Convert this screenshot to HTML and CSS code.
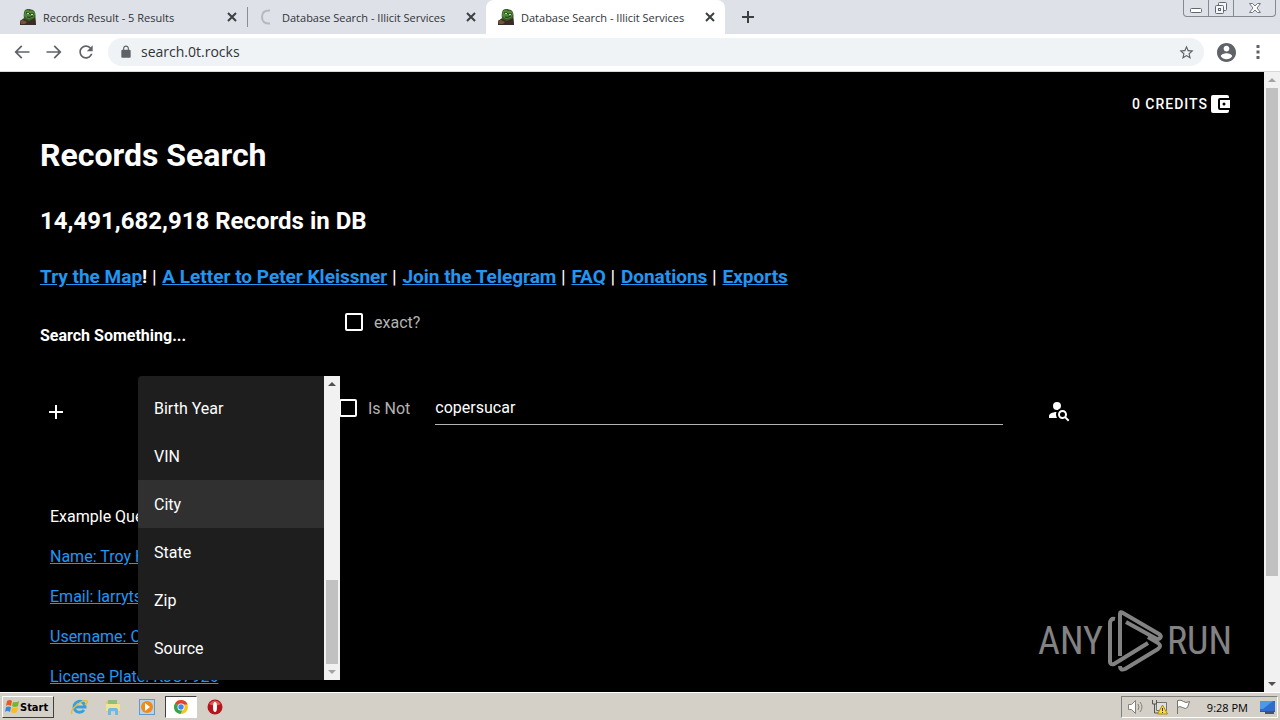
FILE: index.html
```html
<!DOCTYPE html>
<html lang="en">
<head>
<meta charset="utf-8">
<title>Database Search - Illicit Services</title>
<link rel="stylesheet" href="styles.css">
</head>
<body>
<svg class="defs" aria-hidden="true">
  <symbol id="close" viewBox="0 0 10 10"><path d="M1 1l8 8M9 1L1 9" stroke="#3c4043" stroke-width="2"/></symbol>
  <symbol id="frog" viewBox="0 0 16 16">
    <path d="M5 1q3-2 6-.5Q16 1 15.500 8l.5 8H0v-4l4-3q-1-5 1-8z" fill="#3c5a2c"/>
    <path d="M5 2q3-2 5 0 4-1 5 3l-2 4-5 1-4-3z" fill="#4f8a36"/>
    <path d="M6 4h3l1 1h4M7 8q3 1 6-1" stroke="#1d3518" fill="none"/>
    <path d="M7 4h2v1H7zM11 5h2v1h-2z" fill="#c5d8ae"/>
    <path d="M0 12l4-2 5 2 6-3 1 7H0z" fill="#3b2b25"/>
    <path d="M0 12l3-1 4 2-2 2H1z" fill="#765336"/>
  </symbol>
</svg>

<header class="tabstrip">
  <nav class="tabs">
    <div class="tab"><svg class="favicon"><use href="#frog"/></svg><span class="tab-title">Records Result - 5 Results</span><button class="plain" aria-label="Close tab"><svg class="x"><use href="#close"/></svg></button></div>
    <div class="tab divided"><svg class="favicon" viewBox="0 0 16 16"><path d="M11 1.500Q3 1 3 8T11 14.500" fill="none" stroke="#b5b8bd" stroke-width="2"/></svg><span class="tab-title">Database Search - Illicit Services</span><button class="plain" aria-label="Close tab"><svg class="x"><use href="#close"/></svg></button></div>
    <div class="tab active"><svg class="favicon"><use href="#frog"/></svg><span class="tab-title">Database Search - Illicit Services</span><button class="plain" aria-label="Close tab"><svg class="x"><use href="#close"/></svg></button></div>
    <button class="plain new-tab" aria-label="New tab"><svg width="12" height="12" viewBox="0 0 12 12"><path d="M6 0v12M0 6h12" stroke="#3c4043" stroke-width="2"/></svg></button>
  </nav>
  <div class="window-controls">
    <button aria-label="Minimize"><svg width="14" height="14" viewBox="0 0 14 14"><rect x="1.500" y="7.500" width="11" height="4" rx="1" fill="#fff" stroke="#62666e"/></svg></button>
    <button aria-label="Restore"><svg width="14" height="14" viewBox="0 0 14 14" fill="#f5f6f8" stroke="#62666e"><rect x="4.500" y="1.500" width="8" height="8" rx="1"/><rect x="1.500" y="4.500" width="8" height="8" rx="1"/><rect x="4.500" y="7.500" width="2" height="2"/></svg></button>
    <button class="wide" aria-label="Close"><svg width="14" height="14" viewBox="0 0 14 14"><path d="M1.500 2.500h3L7 5l2.500-2.500h3L9 7l3.500 4.500h-3L7 9l-2.500 2.500h-3L5 7z" fill="#fff" stroke="#73777f"/></svg></button>
  </div>
</header>

<div class="toolbar">
  <button class="plain tool" aria-label="Back"><svg viewBox="0 0 24 24"><path d="M21 11H6.830l5.590-5.590L11 4l-8 8 8 8 1.410-1.410L6.830 13H21z"/></svg></button>
  <button class="plain tool" aria-label="Forward"><svg viewBox="0 0 24 24"><path d="M3 11h14.170l-5.590-5.590L13 4l8 8-8 8-1.410-1.410L17.170 13H3z"/></svg></button>
  <button class="plain tool" aria-label="Reload"><svg viewBox="0 0 24 24"><path d="M17.650 6.350C16.200 4.900 14.210 4 12 4c-4.420 0-7.990 3.580-7.990 8s3.570 8 7.990 8c3.730 0 6.840-2.550 7.730-6h-2.080c-.82 2.330-3.040 4-5.650 4-3.310 0-6-2.690-6-6s2.690-6 6-6c1.660 0 3.140.69 4.220 1.780L13 11h7V4l-2.350 2.350z"/></svg></button>
  <div class="address">
    <svg class="lock" viewBox="0 0 24 24"><path d="M18 8h-1V6c0-2.760-2.240-5-5-5S7 3.240 7 6v2H6c-1.100 0-2 .9-2 2v10c0 1.100.9 2 2 2h12c1.100 0 2-.9 2-2V10c0-1.100-.9-2-2-2zm-2.900 0H8.900V6a3.100 3.100 0 0 1 6.200 0z"/></svg>
    <input class="url" type="text" aria-label="Address" value="search.0t.rocks">
    <button class="plain" aria-label="Bookmark"><svg class="star" viewBox="0 0 24 24"><path d="M22 9.240l-7.190-.62L12 2 9.190 8.630 2 9.240l5.460 4.730L5.820 21 12 17.270 18.180 21l-1.630-7.030L22 9.240zM12 15.400l-3.760 2.270 1-4.280-3.320-2.880 4.380-.38L12 6.100l1.710 4.040 4.380.38-3.320 2.880 1 4.280L12 15.400z"/></svg></button>
  </div>
  <button class="plain profile" aria-label="Profile"><svg viewBox="2 2 20 20"><path d="M12 2C6.480 2 2 6.480 2 12s4.480 10 10 10 10-4.480 10-10S17.520 2 12 2zm0 3c1.660 0 3 1.340 3 3s-1.340 3-3 3-3-1.340-3-3 1.340-3 3-3zm0 14.200c-2.500 0-4.710-1.280-6-3.220.03-1.990 4-3.080 6-3.080s5.970 1.090 6 3.080c-1.290 1.940-3.500 3.220-6 3.220z"/></svg></button>
  <button class="plain more" aria-label="Menu"><svg width="4" height="14" viewBox="0 0 4 14"><path d="M.5 0h3v3h-3zM.5 5.500h3v3h-3zM.5 11h3v3h-3z"/></svg></button>
</div>

<div class="viewport">
  <main class="page">
    <div class="account"><button class="plain credits">0 CREDITS<svg viewBox="0 0 24 24"><path d="M21 18v1a2 2 0 0 1-2 2H5a2 2 0 0 1-2-2V5a2 2 0 0 1 2-2h14a2 2 0 0 1 2 2v1h-9a2 2 0 0 0-2 2v8a2 2 0 0 0 2 2m0-2h10V8H12m4 5.500a1.500 1.500 0 1 1 0-3 1.500 1.500 0 0 1 0 3z"/></svg></button></div>
    <h1>Records Search</h1>
    <h2>14,491,682,918 Records in DB</h2>
    <p class="links"><b><a href="#">Try the Map</a>!</b> | <a href="#">A Letter to Peter Kleissner</a> | <a href="#">Join the Telegram</a> | <a href="#">FAQ</a> | <a href="#">Donations</a> | <a href="#">Exports</a></p>
    <div class="intro">
      <h4>Search Something...</h4>
      <label class="check"><input type="checkbox">exact?</label>
    </div>
    <form class="query">
      <button type="button" class="plain add" aria-label="Add condition"><svg width="14" height="14" viewBox="0 0 14 14"><path d="M7 0v14M0 7h14" stroke="#fff" stroke-width="2"/></svg></button>
      <div class="field">
        <div class="menu">
          <ul class="options" role="listbox" aria-label="Field">
            <li role="option">Birth Year</li>
            <li role="option">VIN</li>
            <li role="option" class="hover">City</li>
            <li role="option">State</li>
            <li role="option">Zip</li>
            <li role="option">Source</li>
          </ul>
          <div class="scroll"><i class="up"></i><div class="track end"><div class="thumb menu-thumb"></div></div><i class="down faint"></i></div>
        </div>
      </div>
      <label class="check"><input type="checkbox">Is Not</label>
      <input class="value" type="text" aria-label="Value" value="copersucar">
      <button type="button" class="plain search" aria-label="Search"><svg width="24" height="24" viewBox="0 0 24 24"><path fill="#fff" d="M15.500 12c2.500 0 4.500 2 4.500 4.500 0 .88-.25 1.710-.69 2.400L22.390 22 21 23.390l-3.120-3.070c-.69.430-1.510.68-2.380.68-2.500 0-4.500-2-4.500-4.500s2-4.500 4.500-4.500m0 2a2.500 2.500 0 1 0 0 5 2.500 2.500 0 0 0 0-5M10 4a4 4 0 0 1 4 4c0 .91-.31 1.750-.82 2.430-.86.320-1.630.83-2.270 1.470L10 12a4 4 0 0 1 0-8M2 20v-2c0-2.120 3.310-3.860 7.500-4-.32.780-.5 1.620-.5 2.500 0 1.290.38 2.500 1 3.500z"/></svg></button>
    </form>
    <div class="examples">
      <p>Example Que</p>
      <a href="#">Name: Troy H</a>
      <a href="#">Email: larryts</a>
      <a href="#">Username: C</a>
      <a href="#">License Plate: KJC7926</a>
    </div>
    <div class="watermark" aria-hidden="true">
      <span>ANY</span>
      <svg width="56" height="62" viewBox="0 0 56 62" fill="none" stroke="#828282" stroke-width="4" stroke-linejoin="round"><path d="M8 9Q3 8 3 14v38q0 3 4 2l34-21"/><path d="M13 46V4q0-3 3-1l36 21q3 2 1 4-2 2-5 0L19 12"/><path d="M13 56q0 5 5 3l33-20q4-3 0-6L41 27"/></svg>
      <span>RUN</span>
    </div>
  </main>
  <div class="scroll"><i class="up faint"></i><div class="track"><div class="thumb page-thumb"></div></div><i class="down"></i></div>
</div>

<footer class="taskbar">
  <button class="start"><svg width="16" height="16" viewBox="0 0 16 16"><path d="M3 2q3-2 5 0L7 7Q4 5 2 7z" fill="#e75b23"/><path d="M9 3q3 1 6-1l-1 5q-3 2-6 0z" fill="#78b42c"/><path d="M2 8q3-1 5 0l-1 5q-3-2-5 0z" fill="#348bd4"/><path d="M8 8q3 2 6 0l-1 5q-3 2-6 0z" fill="#f6bd24"/></svg>Start</button>
  <button class="launch" aria-label="Internet Explorer"><svg viewBox="0 0 18 18" fill="none"><path d="M14 12a5.500 5.500 0 1 1 1-3H5" stroke="#35a0df" stroke-width="3"/><path d="M2 16C-1 12 12 1 17 3c1 1-1 3-2 4" stroke="#e8bc39" stroke-width="1.500"/></svg></button>
  <button class="launch" aria-label="Explorer"><svg viewBox="0 0 18 18"><path d="M2 3h5l1 2h8v9H2z" fill="#e9c968"/><path d="M4 2h9v5H4z" fill="#8ac078"/><path d="M2 6h14v7H2z" fill="#f6e294"/><path d="M4 17v-5q0-2 2-2h6q2 0 2 2v5h-3v-4H7v4z" fill="#70b9df"/></svg></button>
  <button class="launch" aria-label="Media Player"><svg viewBox="0 0 18 18"><rect x="1.500" y="1.500" width="15" height="15" fill="#b6d4ee" stroke="#6599c7"/><circle cx="9" cy="9" r="6" fill="#f28a16"/><path d="M7 5l5 4-5 4z" fill="#fff"/></svg></button>
  <button class="launch pressed" aria-label="Chrome"><svg viewBox="0 0 18 18"><circle cx="9" cy="9" r="7" fill="#f6c61d"/><path d="M9 9L3 5.400A7 7 0 0 1 15.600 6.500H9z" fill="#db4437"/><path d="M3 5.400A7 7 0 0 0 8.500 16L11 10.500 9 9z" fill="#32a350"/><circle cx="9" cy="9" r="3.500" fill="#fff"/><circle cx="9" cy="9" r="2.700" fill="#4285f4"/></svg></button>
  <button class="launch" aria-label="Opera"><svg viewBox="0 0 18 18"><circle cx="9" cy="9" r="7.500" fill="#b5141c"/><path d="M3 6q6-7 12 0-6 3-12 0z" fill="#de5a58"/><ellipse cx="9" cy="9" rx="2" ry="5" fill="#fff"/></svg></button>
  <div class="tray">
    <svg width="18" height="16" viewBox="0 0 18 16" fill="#fff" stroke="#85817a"><path d="M1.500 5.500h3l4-4v13l-4-4h-3z"/><path d="M11 5q2 3 0 6M13 3q4 5 0 10" fill="none"/></svg>
    <svg width="18" height="16" viewBox="0 0 18 16"><path d="M5.500 3.500h10v8h-10z" fill="#dce1e5" stroke="#77736d"/><path d="M1.500 1v4h4V1M3.500 5v9h5" fill="none" stroke="#555"/><path d="M11.500 6l5 9h-10z" fill="#ffdc28" stroke="#ae890b"/><path d="M11 9h1v3h-1zm0 4h1v1h-1z" fill="#333"/></svg>
    <svg width="18" height="16" viewBox="0 0 18 16"><path d="M2.500 15V1.500q4-1 6 1t6 0l-2 6q-2 2-5 0t-5 0" fill="#fff" stroke="#77736d"/></svg>
    <time>9:28 PM</time>
    <svg width="16" height="16" viewBox="0 0 16 16"><path d="M0 2h15v10H0z" fill="#2d6dcc"/><path d="M0 2h13L3 10H0z" fill="#4a9ae7"/><path d="M0 12h15v1H0zM5 13h9v2H5z" fill="#46536a"/></svg>
  </div>
</footer>
</body>
</html>
```

FILE: styles.css
```css
* { box-sizing: border-box; }
body {
  margin: 0;
  height: 100vh;
  display: flex;
  flex-direction: column;
  overflow: hidden;
  font-family: Roboto, sans-serif;
  font-size: 16px;
}
svg { display: block; flex: none; }
.defs { position: absolute; width: 0; height: 0; }
.plain { padding: 0; border: 0; background: none; flex: none; }

.tabstrip {
  height: 34px;
  display: flex;
  justify-content: space-between;
  align-items: flex-start;
  padding: 0 4px 0 8px;
  background: #dee1e8;
}
.tabs { display: flex; height: 34px; }
.tab {
  width: 239px;
  display: flex;
  align-items: center;
  padding: 0 10px 0 12px;
  gap: 7px;
  font: 11px "Open Sans", "Noto Sans", sans-serif;
  color: #303438;
}
.tab-title { flex: 1; white-space: nowrap; }
.divided { background: linear-gradient(#8b8e94, #8b8e94) 0 7px / 1px 20px no-repeat; }
.active { background: #fff; border-radius: 8px 8px 0 0; }
.favicon { width: 16px; height: 16px; }
.x { width: 10px; height: 10px; }
.new-tab { padding: 0 17px; }
.window-controls {
  display: flex;
  height: 17px;
  border: 1px solid #858991;
  border-top: 0;
  border-radius: 0 0 4px 4px;
}
.window-controls button {
  width: 25px;
  padding: 0;
  border: 0;
  border-right: 1px solid #858991;
  background: none;
  display: grid;
  place-items: center;
}
.window-controls .wide { width: 41px; border: 0; }

.toolbar {
  height: 38px;
  display: flex;
  align-items: center;
  padding: 0 20px 1px 12px;
  border-bottom: 1px solid #d6d8db;
  background: #fff;
  fill: #5f6368;
}
.tool { margin-right: 12px; }
.tool svg { width: 20px; height: 20px; }
.address {
  flex: 1;
  height: 28px;
  display: flex;
  align-items: center;
  padding: 0 9px 0 11px;
  border-radius: 14px;
  background: #f0f3f5;
}
.lock { width: 14px; height: 14px; }
.url {
  flex: 1;
  margin: 0 8px;
  padding: 0;
  border: 0;
  background: none;
  font: 14px "Open Sans", "Noto Sans", sans-serif;
  line-height: 20px;
  color: #303438;
}
.star { width: 17px; height: 17px; }
.profile { margin: 0 20px 0 13px; }
.profile svg { width: 19px; height: 19px; }

.viewport { flex: 1; min-height: 0; display: flex; background: #000; color: #fff; }
.page { flex: 1; position: relative; overflow: hidden; padding: 0 40px; }
.account { display: flex; justify-content: flex-end; padding-top: 20px; margin-right: -8px; }
.credits {
  display: flex;
  align-items: center;
  font: 500 14px Roboto, sans-serif;
  letter-spacing: 1px;
  color: #fff;
}
.credits svg { width: 24px; height: 24px; fill: #fff; }
h1, h2, h4, p { margin: 0; }
h1 { margin-top: 19px; font-size: 32px; line-height: 40px; font-weight: 700; }
h2 { margin-top: 30px; font-size: 24px; line-height: 32px; }
a { color: #2196f3; }
.links { margin-top: 28px; font-size: 19px; line-height: 24px; }
.links a { font-weight: 700; }
.links > a { margin-left: 1px; }
.intro { display: flex; margin-top: 21px; }
h4 { width: 305px; padding-top: 14px; font-size: 16px; line-height: 24px; }
.check { display: flex; align-items: center; gap: 11px; height: 24px; color: #b3b3b3; }
.check input {
  appearance: none;
  width: 18px;
  height: 18px;
  margin: 0;
  border: 2px solid #fff;
  border-radius: 2px;
}
.query { display: flex; align-items: flex-start; margin-top: 28px; height: 108px; }
.add { padding: 29px 8px 0 9px; }
.field { position: relative; width: 268px; height: 48px; }
.menu {
  position: absolute;
  z-index: 1;
  top: 0;
  right: -1px;
  width: 202px;
  height: 304px;
  display: flex;
  overflow: hidden;
  border-radius: 4px 0 0 4px;
  background: #1e1e1e;
}
.options { flex: 1; margin: 0; padding: 8px 0; list-style: none; }
.options li { height: 48px; padding: 0 16px; line-height: 50px; }
.options .hover { background: #303030; }
.query .check { margin: 20px 25px 0 0; }
.value {
  flex: 1;
  height: 33px;
  margin-top: 16px;
  padding: 0 0 2px;
  border: 0;
  border-bottom: 1px solid #b3b3b3;
  background: none;
  font: 16px Roboto, sans-serif;
  color: #fff;
}
.search { margin: 22px 153px 0 44px; }
.examples { display: flex; flex-direction: column; align-items: flex-start; gap: 16px; padding: 21px 10px; line-height: 24px; }

.watermark {
  position: absolute;
  right: 32px;
  bottom: 20px;
  display: flex;
  align-items: center;
  gap: 4px;
  font: 38px "Liberation Sans Narrow", "Roboto Condensed", Roboto, sans-serif;
  color: #828282;
}

.scroll { width: 16px; display: flex; flex-direction: column; background: #f1f1f1; }
.track { flex: 1; display: flex; flex-direction: column; padding: 0 2px; }
.end { justify-content: flex-end; }
.thumb { background: #c1c1c1; }
.page-thumb { height: 83%; }
.menu-thumb { height: 31%; }
.up, .down { height: 16px; display: grid; place-items: center; }
.up::before { content: ""; border: 4px solid transparent; border-top: 0; border-bottom-color: #505050; }
.down::before { content: ""; border: 4px solid transparent; border-bottom: 0; border-top-color: #505050; }
.up.faint::before { border-bottom-color: #a3a3a3; }
.down.faint::before { border-top-color: #a3a3a3; }

.taskbar {
  height: 28px;
  display: flex;
  align-items: center;
  padding: 1px 2px 0;
  border-top: 1px solid #fff;
  background: #d4d0c8;
}
.start {
  display: flex;
  align-items: center;
  height: 22px;
  width: 52px;
  margin-right: 9px;
  padding: 0 1px;
  border: 1px solid;
  border-color: #fff #404040 #404040 #fff;
  background: #d4d0c8;
  font: bold 11px "DejaVu Sans Condensed", "DejaVu Sans", sans-serif;
  font-stretch: condensed;
}
.launch {
  width: 32px;
  height: 22px;
  margin-right: 2px;
  padding: 0;
  border: 1px solid transparent;
  background: none;
  display: grid;
  place-items: center;
}
.launch svg { width: 18px; height: 18px; }
.pressed { border-color: #404040 #fff #fff #404040; background: #fff; }
.tray {
  margin-left: auto;
  height: 22px;
  display: flex;
  align-items: center;
  gap: 6px;
  padding: 0 1px 0 5px;
  border: 1px solid;
  border-color: #808080 #fff #fff #808080;
}
time { margin: 0 6px 0 8px; font: 11px "Open Sans", "Noto Sans", sans-serif; }
```
